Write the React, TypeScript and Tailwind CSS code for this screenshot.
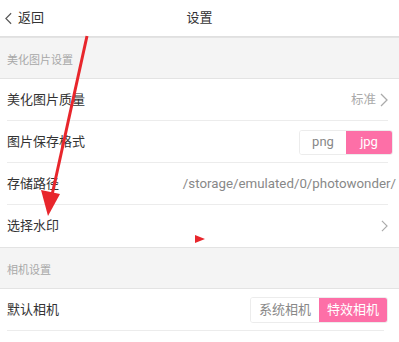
import React from 'react';

const font = { fontFamily: 'Roboto, "Noto Sans CJK SC", sans-serif' };

function Chevron({ className }: { className?: string }) {
  return (
    <svg viewBox="0 0 8 14" className={className} fill="none" stroke="currentColor" strokeWidth="1.3">
      <path d="M1 1l6 6-6 6" />
    </svg>
  );
}

function Section({ title }: { title: string }) {
  return (
    <div className="flex h-[42px] items-end border-y border-[#e3e3e3] bg-[#f4f4f4] pb-[9px] pl-[7px] text-[11px] text-[#a8a8a8]">
      {title}
    </div>
  );
}

function Row({ label, children, last }: { label: string; children?: React.ReactNode; last?: boolean }) {
  return (
    <div className="relative flex h-[42px] items-center pl-[7px] pr-[7px]">
      <span className="text-[13px] text-[#333]">{label}</span>
      <div className="ml-auto flex items-center">{children}</div>
      {!last && <div className="absolute bottom-0 left-[7px] right-[11px] h-px bg-[#ececec]" />}
    </div>
  );
}

function Segmented({ items, active, w, h }: { items: string[]; active: number; w: string; h: string }) {
  return (
    <div className={`flex ${h} overflow-hidden rounded-[3px] border border-[#ececec] text-[13px]`}>
      {items.map((it, i) => (
        <div
          key={it}
          className={`flex ${w} items-center justify-center ${i === active ? 'bg-[#fd6fa7] text-white' : 'bg-white text-[#888]'}`}
        >
          {it}
        </div>
      ))}
    </div>
  );
}

export default function App() {
  return (
    <div className="relative h-[342px] w-[399px] overflow-hidden bg-white" style={font}>
      <div className="relative flex h-[37px] items-center border-b border-[#e0e0e0]">
        <div className="flex items-center pl-[5px] text-[13px] text-[#333]">
          <Chevron className="h-[13px] w-[7px] rotate-180 text-[#555]" />
          <span className="ml-[6px]">返回</span>
        </div>
        <div className="absolute left-0 right-0 text-center text-[13px] text-[#333]">设置</div>
      </div>

      <Section title="美化图片设置" />
      <Row label="美化图片质量">
        <span className="text-[12.5px] text-[#aaa]">标准</span>
        <Chevron className="ml-[4px] mr-[4px] h-[14px] w-[8px] text-[#aaa]" />
      </Row>
      <Row label="图片保存格式">
        <div className="-mr-[1px]">
          <Segmented items={['png', 'jpg']} active={1} w="w-[46px]" h="h-[25px]" />
        </div>
      </Row>
      <Row label="存储路径">
        <span className="-mr-[4px] text-[13.3px] text-[#888]">/storage/emulated/0/photowonder/</span>
      </Row>
      <Row label="选择水印" last>
        <Chevron className="mr-[4px] h-[12px] w-[7px] text-[#aaa]" />
      </Row>

      <Section title="相机设置" />
      <div className="pr-[4px]">
        <Row label="默认相机">
          <Segmented items={['系统相机', '特效相机']} active={1} w="w-[68px]" h="h-[26px]" />
        </Row>
      </div>

      <svg className="pointer-events-none absolute left-0 top-0" width="399" height="342">
        <line x1="87" y1="36" x2="52" y2="195" stroke="#e8262c" strokeWidth="3" />
        <polygon points="41,190 60,194 48,216" fill="#e8262c" />
        <polygon points="195,235 205,239 195,243" fill="#e8262c" />
      </svg>
    </div>
  );
}
